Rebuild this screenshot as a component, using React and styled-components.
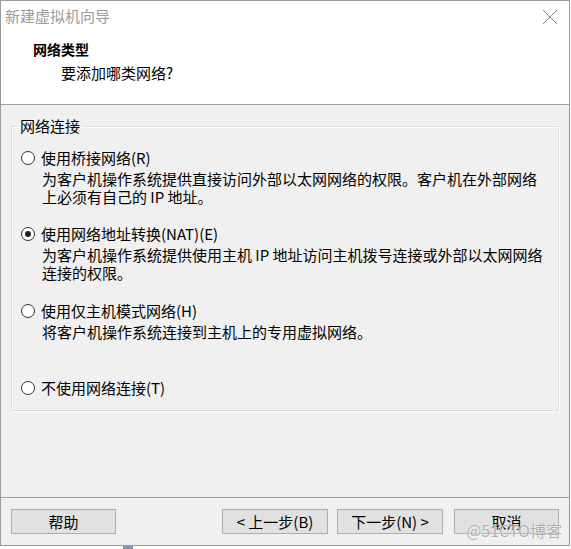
import React from "react"
import styled, { createGlobalStyle } from "styled-components"

const GlobalStyle = createGlobalStyle`
  html, body {
    margin: 0;
    padding: 0;
    background: #ffffff;
  }
  body {
    font-family: "Noto Sans CJK SC", "Liberation Sans", sans-serif;
    font-size: 15px;
    color: #000;
  }
`

const options = [
  {
    label: "使用桥接网络(R)",
    desc: ["为客户机操作系统提供直接访问外部以太网网络的权限。客户机在外部网络", "上必须有自己的 IP 地址。"],
    gap: 0,
  },
  {
    label: "使用网络地址转换(NAT)(E)",
    desc: ["为客户机操作系统提供使用主机 IP 地址访问主机拨号连接或外部以太网网络", "连接的权限。"],
    checked: true,
    gap: 19,
  },
  {
    label: "使用仅主机模式网络(H)",
    desc: ["将客户机操作系统连接到主机上的专用虚拟网络。"],
    gap: 20,
  },
  {
    label: "不使用网络连接(T)",
    gap: 38,
  },
]

const App = () => (
  <>
    <GlobalStyle />
    <Window>
      <TitleBar>
        <TitleText>新建虚拟机向导</TitleText>
        <CloseButton>
          <svg width="16" height="16" viewBox="0 0 16 16">
            <path d="M1 1 L15 15 M15 1 L1 15" stroke="#8a8a8a" strokeWidth="1" fill="none" />
          </svg>
        </CloseButton>
      </TitleBar>

      <Header>
        <HeaderTitle>网络类型</HeaderTitle>
        <HeaderSub>要添加哪类网络?</HeaderSub>
      </Header>

      <Body>
        <Group>
          <Legend>网络连接</Legend>
          {options.map(o => (
            <Option key={o.label} $gap={o.gap}>
              <OptionRow>
                <Radio $checked={o.checked} />
                <span>{o.label}</span>
              </OptionRow>
              {o.desc && (
                <Desc>
                  {o.desc.map((line, i) => (
                    <React.Fragment key={line}>
                      {i > 0 && <br />}
                      {line}
                    </React.Fragment>
                  ))}
                </Desc>
              )}
            </Option>
          ))}
        </Group>
      </Body>

      <Footer>
        <Button $width={105}>帮助</Button>
        <Spacer />
        <Button $width={106}>&lt; 上一步(B)</Button>
        <Button $width={106} $ml={9}>下一步(N) &gt;</Button>
        <Button $width={105} $ml={11}>取消</Button>
      </Footer>

      <Watermark>@51CTO博客</Watermark>
    </Window>
    <Taskbar>
      <TaskbarBlock />
    </Taskbar>
  </>
)

const Window = styled.div`
  position: relative;
  box-sizing: border-box;
  width: 570px;
  height: 546px;
  border: 1px solid #9a9a9a;
  background: #f0f0f0;
  display: flex;
  flex-direction: column;
`

const TitleBar = styled.div`
  height: 31px;
  background: #fff;
  display: flex;
  align-items: center;
  justify-content: space-between;
  padding: 0 11px 0 4px;
`

const TitleText = styled.span`
  color: #9b9b9b;
  font-size: 15px;
  line-height: 18px;
  margin-top: -1px;
`

const CloseButton = styled.div`
  width: 16px;
  height: 16px;
  display: flex;
  margin-top: 1px;
`

const Header = styled.div`
  height: 72px;
  background: #fff;
  border-bottom: 1px solid #a0a0a0;
  display: flex;
  flex-direction: column;
`

const HeaderTitle = styled.div`
  font-weight: bold;
  font-size: 14px;
  line-height: 18px;
  margin: 8px 0 0 32px;
`

const HeaderSub = styled.div`
  font-size: 15px;
  line-height: 18px;
  margin: 6px 0 0 60px;
`

const Body = styled.div`
  height: 380px;
  border-bottom: 1px solid #a0a0a0;
  padding: 12px 10px 0 10px;
`

const Group = styled.fieldset`
  margin: 0;
  padding: 14px 8px 13px 8px;
  border: 1px solid #dcdcdc;
  box-shadow: inset 1px 1px 0 #fff, 1px 1px 0 #fff;
  min-width: 0;
`

const Legend = styled.legend`
  font-size: 15px;
  line-height: 18px;
  padding: 0 2px;
  margin-left: -2px;
`

const Option = styled.div`
  margin-top: ${p => p.$gap}px;
`

const OptionRow = styled.div`
  display: flex;
  align-items: center;
  line-height: 18px;
  gap: 6px;
`

const Radio = styled.span`
  position: relative;
  box-sizing: border-box;
  width: 14px;
  height: 14px;
  flex: none;
  margin-left: 1px;
  border-radius: 50%;
  border: 1px solid #333;
  background: #fff;

  &::after {
    content: "";
    display: ${p => (p.$checked ? "block" : "none")};
    position: absolute;
    left: 3px;
    top: 3px;
    width: 6px;
    height: 6px;
    border-radius: 50%;
    background: #222;
  }
`

const Desc = styled.p`
  margin: 3px 0 0 22px;
  line-height: 18px;
  white-space: nowrap;
`

const Footer = styled.div`
  flex: 1;
  display: flex;
  align-items: flex-start;
  padding: 11px 10px 0 10px;
`

const Spacer = styled.div`
  flex: 1;
`

const Button = styled.div`
  box-sizing: border-box;
  width: ${p => p.$width}px;
  height: 25px;
  margin-left: ${p => p.$ml || 0}px;
  border: 1px solid #adadad;
  background: #e1e1e1;
  display: flex;
  align-items: center;
  justify-content: center;
  font-size: 15px;
  line-height: 18px;
`

const Watermark = styled.div`
  position: absolute;
  right: 7px;
  bottom: 6px;
  font-size: 16px;
  line-height: 18px;
  color: #a9a9a9;
  text-shadow: 0 0 2px #fff, 0 0 1px #fff;
  opacity: 0.9;
`

const Taskbar = styled.div`
  height: 3px;
  display: flex;
  padding-left: 123px;
`

const TaskbarBlock = styled.div`
  width: 10px;
  background: #8a94a6;
`

export default App
